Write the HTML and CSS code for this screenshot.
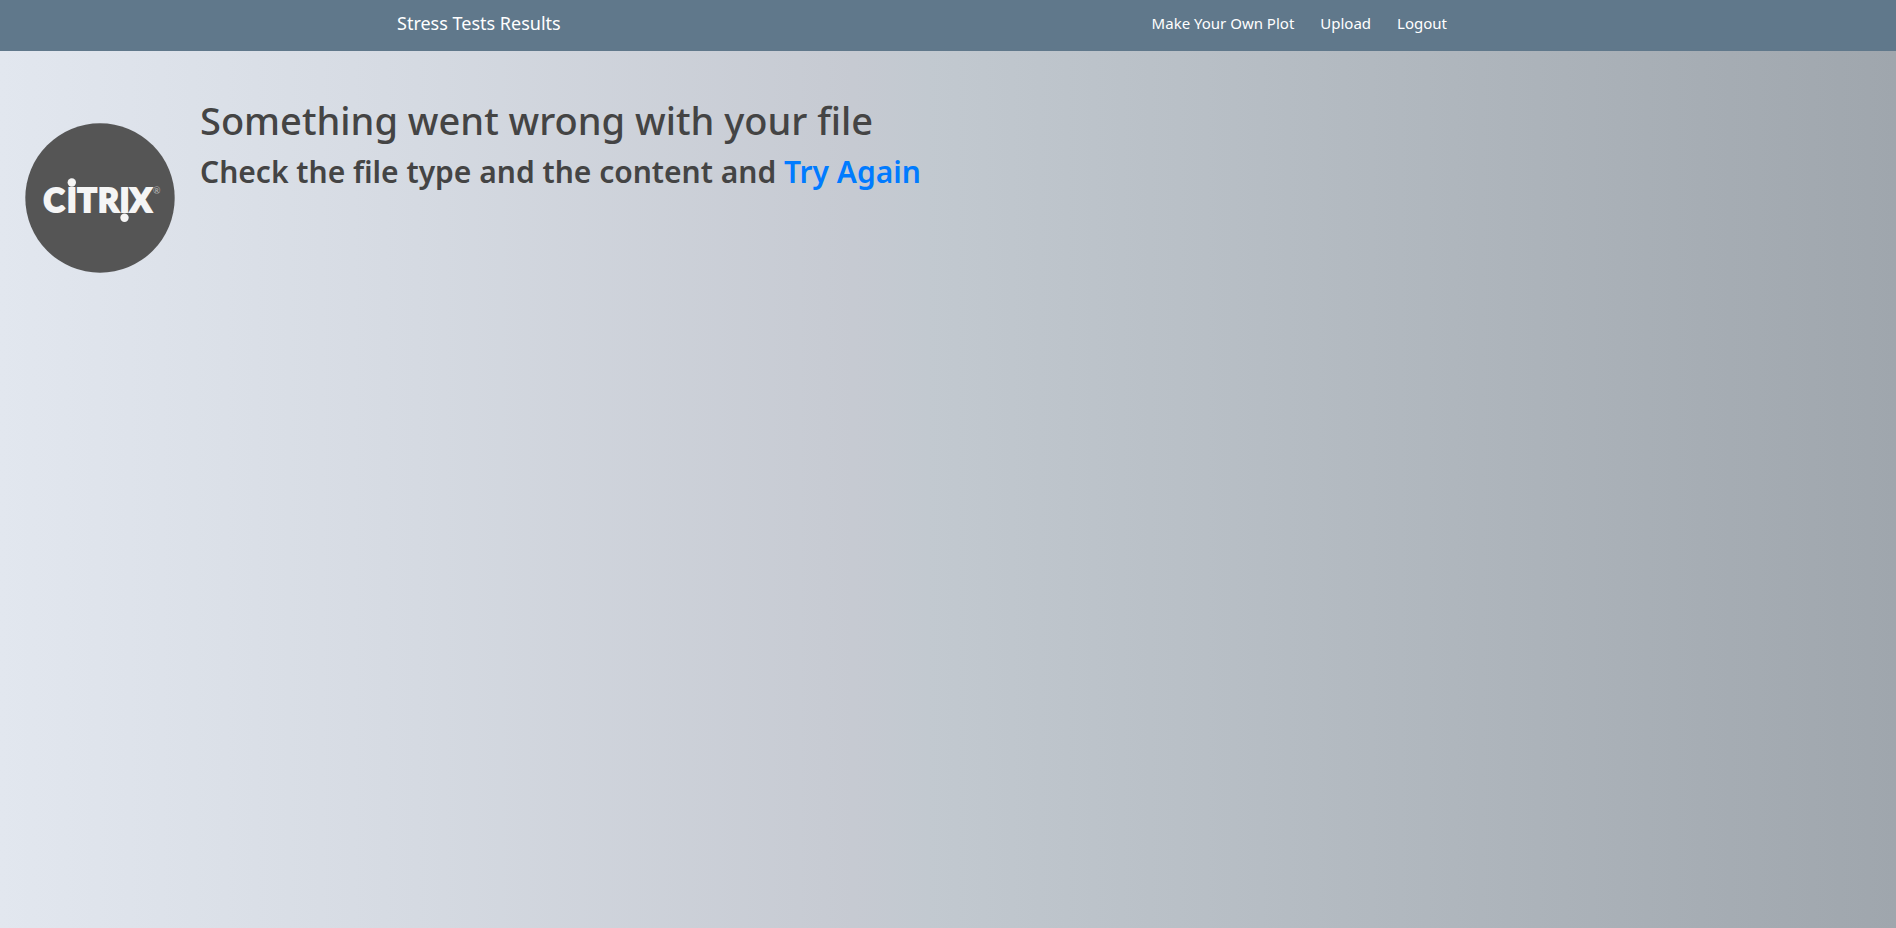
FILE: index.html
```html
<!DOCTYPE html>
<html lang="en">
<head>
<meta charset="utf-8">
<meta name="viewport" content="width=device-width, initial-scale=1">
<title>Stress Tests Results</title>
<link rel="stylesheet" href="styles.css">
</head>
<body class="page">
<header class="navbar">
  <div class="navbar-inner">
    <a class="brand" href="#">Stress Tests Results</a>
    <nav class="nav-links">
      <a class="nav-link" href="#">Make Your Own Plot</a>
      <a class="nav-link" href="#">Upload</a>
      <a class="nav-link" href="#">Logout</a>
    </nav>
  </div>
</header>
<main class="content">
  <svg class="logo" viewBox="0 0 150 150" role="img" aria-label="Citrix">
    <circle cx="75" cy="75" r="74.7" fill="#555"/>
    <g fill="#f5f5f5">
      <text class="logo-text" y="88.5" x="18.5 42 52.5 73 94.7 105">CITRIX</text>
      <circle cx="46.8" cy="59.5" r="4.2"/>
      <circle cx="99.5" cy="94.7" r="4.2"/>
    </g>
    <text class="logo-mark" x="128" y="71" fill="#bbb">®</text>
  </svg>
  <div class="message">
    <h1 class="title">Something went wrong with your file</h1>
    <h2 class="subtitle">Check the file type and the content and <a class="retry" href="#">Try Again</a></h2>
  </div>
</main>
</body>
</html>
```
FILE: styles.css
```css
* {
  box-sizing: border-box;
}

.page {
  margin: 0;
  min-height: 100vh;
  font-family: "Noto Sans", "Open Sans", sans-serif;
  color: #444;
  background: linear-gradient(to right, #e2e7ef 0%, #d5dae2 22%, #c6cad2 45%, #c2c9d0 49%, #9fa6ad 100%);
}

.navbar {
  height: 51px;
  padding: 0 16px;
  background: #60788b;
}

.navbar-inner {
  display: flex;
  align-items: center;
  justify-content: space-between;
  height: 46px;
  max-width: 1110px;
  margin: 0 auto;
  padding: 0 56px 0 4px;
}

.brand,
.nav-link {
  color: #fff;
  text-decoration: none;
  white-space: nowrap;
}

.brand {
  font-size: 18px;
}

.nav-links {
  display: flex;
  gap: 26px;
}

.nav-link {
  font-size: 15px;
}

.content {
  display: flex;
  align-items: flex-start;
  gap: 25px;
  padding: 45px 25px;
}

.logo {
  flex: none;
  width: 150px;
  height: 150px;
  margin-top: 27px;
}

.logo-text {
  font: 900 32px Lato, sans-serif;
  stroke: #f5f5f5;
  stroke-width: 2;
}

.logo-mark {
  font: 9px Lato, sans-serif;
}

.title,
.subtitle {
  margin: 0;
}

.title {
  font-size: 38px;
  font-weight: 500;
  line-height: 48px;
  margin-bottom: 8px;
}

.subtitle {
  font-size: 30px;
  font-weight: 600;
  line-height: 40px;
}

.retry {
  color: #007bff;
  text-decoration: none;
}
```
